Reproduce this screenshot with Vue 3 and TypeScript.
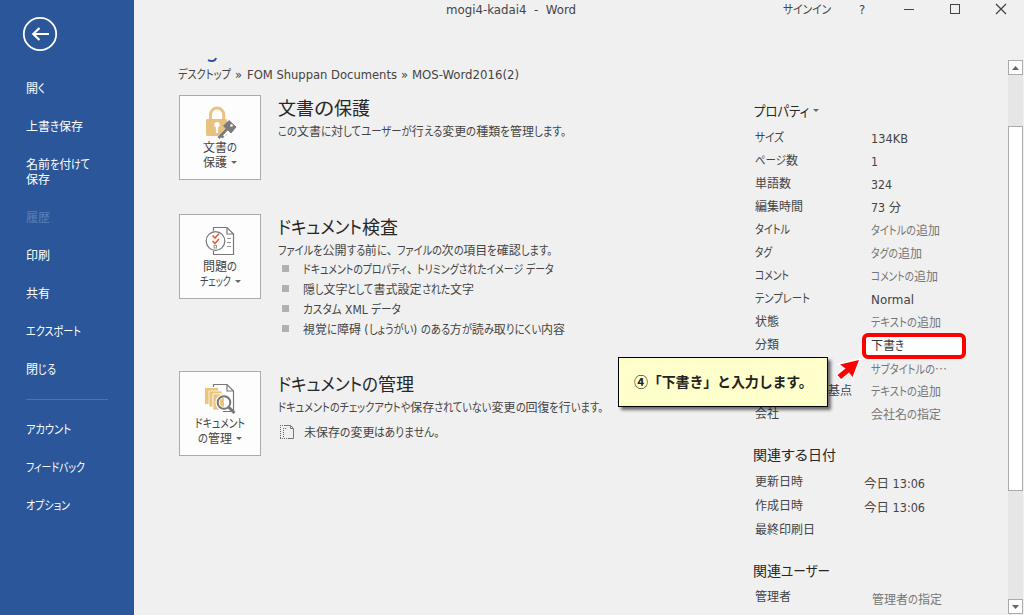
<script setup lang="ts">
import { defineComponent, h, onMounted, ref } from 'vue'

// Sets a line of text to a fixed width by condensing its kana runs;
// lines without kana are scaled as a whole.
const FitText = defineComponent({
  props: {
    text: { type: String, required: true },
    w: { type: Number, required: true },
  },
  setup(props) {
    const root = ref<HTMLElement | null>(null)
    const scale = ref(1)
    const widths = ref<number[]>([])
    const kana = /([\u3002\u3040-\u30ff]+)/
    const runs = props.text.split(kana).filter((s) => s.length > 0)
    const hasKana = kana.test(props.text)
    const flexible = (s: string) => !hasKana || kana.test(s)
    onMounted(() => {
      const parts = Array.from(root.value!.children) as HTMLElement[]
      const natural = parts.map((p) => p.getBoundingClientRect().width)
      let fixed = 0
      let free = 0
      runs.forEach((r, i) => {
        if (flexible(r)) free += natural[i]
        else fixed += natural[i]
      })
      scale.value = (props.w - fixed) / free
      widths.value = natural
    })
    return () =>
      h(
        'span',
        { ref: root, class: 'fit' },
        runs.map((r, i) => {
          const flex = flexible(r) && widths.value.length > 0
          return h(
            'span',
            {
              class: ['fit-run', { 'fit-comma': r === '、' }],
              style: flex ? { width: `${widths.value[i] * scale.value}px` } : {},
            },
            [h('span', { class: 'fit-ink', style: flex ? { transform: `scaleX(${scale.value})` } : {} }, r)],
          )
        }),
      )
  },
})

interface Line { text: string; w: number }
interface NavItem { lines: Line[]; off?: boolean }

const nav: NavItem[] = [
  { lines: [{ text: '開く', w: 19 }] },
  { lines: [{ text: '上書き保存', w: 57 }] },
  { lines: [{ text: '名前を付けて', w: 64 }, { text: '保存', w: 24 }] },
  { lines: [{ text: '履歴', w: 24 }], off: true },
  { lines: [{ text: '印刷', w: 24 }] },
  { lines: [{ text: '共有', w: 24 }] },
  { lines: [{ text: 'エクスポート', w: 55 }] },
  { lines: [{ text: '閉じる', w: 30 }] },
]
const navBottom: NavItem[] = [
  { lines: [{ text: 'アカウント', w: 45 }] },
  { lines: [{ text: 'フィードバック', w: 59 }] },
  { lines: [{ text: 'オプション', w: 44 }] },
]

const checks: Line[] = [
  { text: 'ドキュメントのプロパティ、トリミングされたイメージ データ', w: 251 },
  { text: '隠し文字として書式設定された文字', w: 171 },
  { text: 'カスタム XML データ', w: 98 },
  { text: '視覚に障碍 (しょうがい) のある方が読み取りにくい内容', w: 262 },
]

interface Prop { label: string; lw: number; value: string; vw: number; kind: 'set' | 'hint' | 'input' | 'hint clipped' }
const properties: Prop[] = [
  { label: 'サイズ', lw: 29, value: '134KB', vw: 37, kind: 'set' },
  { label: 'ページ数', lw: 43, value: '1', vw: 7, kind: 'set' },
  { label: '単語数', lw: 36, value: '324', vw: 21, kind: 'set' },
  { label: '編集時間', lw: 48, value: '73 分', vw: 30, kind: 'set' },
  { label: 'タイトル', lw: 35, value: 'タイトルの追加', vw: 69, kind: 'hint' },
  { label: 'タグ', lw: 17, value: 'タグの追加', vw: 51, kind: 'hint' },
  { label: 'コメント', lw: 34, value: 'コメントの追加', vw: 67, kind: 'hint' },
  { label: 'テンプレート', lw: 55, value: 'Normal', vw: 43, kind: 'set' },
  { label: '状態', lw: 24, value: 'テキストの追加', vw: 70, kind: 'hint' },
  { label: '分類', lw: 24, value: '下書き', vw: 33, kind: 'input' },
  { label: 'サブタイトル', lw: 54, value: 'サブタイトルの…', vw: 76, kind: 'hint clipped' },
  { label: 'ハイパーリンクの基点', lw: 97, value: 'テキストの追加', vw: 70, kind: 'hint' },
  { label: '会社', lw: 24, value: '会社名の指定', vw: 70, kind: 'hint' },
]

const dates = [
  { label: '更新日時', lw: 48, value: '今日 13:06' },
  { label: '作成日時', lw: 48, value: '今日 13:06' },
  { label: '最終印刷日', lw: 60, value: '' },
]
</script>

<template>
  <div class="window">
    <nav class="side">
      <svg class="back" width="36" height="36" viewBox="0 0 36 36">
        <circle cx="18" cy="18" r="16.2" fill="none" stroke="#fff" stroke-width="1.8" />
        <path d="M27 18H11.5M17.5 12L11.3 18L17.5 24" fill="none" stroke="#fff" stroke-width="2.2" />
      </svg>
      <div v-for="(item, i) in nav" :key="i" class="nav-item" :class="{ off: item.off }">
        <div v-for="l in item.lines" :key="l.text"><FitText :text="l.text" :w="l.w" /></div>
      </div>
      <div class="rule"></div>
      <div v-for="(item, i) in navBottom" :key="'b' + i" class="nav-item">
        <div v-for="l in item.lines" :key="l.text"><FitText :text="l.text" :w="l.w" /></div>
      </div>
    </nav>

    <div class="body">
      <header class="titlebar">
        <div class="doc-title"><FitText text="mogi4-kadai4  -  Word" :w="130" /></div>
        <div class="sign"><FitText text="サインイン" :w="48" /></div>
        <div class="help">?</div>
        <svg class="win-icons" width="104" height="12" viewBox="0 0 104 12" fill="none" stroke="#444">
          <path d="M1 6.5H11" />
          <rect x="47.5" y="1.5" width="9" height="9" />
          <path d="M93 1L103 11M103 1L93 11" stroke-width="1.3" />
        </svg>
      </header>

      <div class="content">
        <main class="info">
          <svg class="title-tail" width="12" height="6" viewBox="0 0 12 6">
            <path d="M1 3.2C4 4.6 8 4.6 9.2 1" fill="none" stroke="#2b579a" stroke-width="2" />
          </svg>
          <div class="crumbs">
            <FitText text="デスクトップ" :w="53" />
            <FitText text="»" :w="7" />
            <FitText text="FOM Shuppan Documents" :w="150" />
            <FitText text="»" :w="7" />
            <FitText text="MOS-Word2016(2)" :w="107" />
          </div>

          <section class="block protect">
            <div class="tile">
              <svg width="34" height="34" viewBox="0 0 34 34">
                <path d="M7.5 15V9.7a6.6 6.6 0 0 1 13.2 0V15" fill="none" stroke="#e9c27f" stroke-width="3" />
                <rect x="3" y="14" width="21" height="17" rx="1.5" fill="#e9c27f" />
                <circle cx="14" cy="19.7" r="2.7" fill="#fff" />
                <path d="M14 20V28" stroke="#fff" stroke-width="2.2" />
                <path d="M16 34L26 23" stroke="#fdfdfd" stroke-width="5" />
                <path d="M20.5 21L26 15.5L33 22L28 28Z" fill="#7b7b7b" stroke="#7b7b7b" />
                <path d="M24 24L15.5 33M18 30.500L20.500 32.500" stroke="#7b7b7b" stroke-width="2.8" />
                <circle cx="28.5" cy="20.5" r="1.3" fill="#fff" />
              </svg>
              <div class="cap"><FitText text="文書の" :w="34" /></div>
              <div class="cap"><FitText text="保護" :w="24" /><i class="caret"></i></div>
            </div>
            <div class="text">
              <h2><FitText text="文書の保護" :w="92" /></h2>
              <p><FitText text="この文書に対してユーザーが行える変更の種類を管理します。" :w="288" /></p>
            </div>
          </section>

          <section class="block inspect">
            <div class="tile">
              <svg width="34" height="34" viewBox="0 0 34 34" fill="none" stroke="#777" stroke-width="1.2">
                <path d="M10.5 7V3.5H24L30.5 10V30.5H10.5V27" fill="#fff" />
                <path d="M24 3.5V10H30.5" />
                <path d="M24 14.5H28M24 18.5H28M24 22.5H28" stroke="#999" stroke-width="1" />
                <circle cx="12.5" cy="17" r="9.3" fill="#fff" />
                <path d="M9.5 11.5L12 14L16 9.5M9.5 17L12 19.5L16 15" stroke="#e8603c" stroke-width="1.7" />
                <rect x="11" y="21.5" width="2.5" height="2.5" stroke="#999" stroke-width="1" />
              </svg>
              <div class="cap"><FitText text="問題の" :w="34" /></div>
              <div class="cap"><FitText text="チェック" :w="31" /><i class="caret"></i></div>
            </div>
            <div class="text">
              <h2><FitText text="ドキュメント検査" :w="120" /></h2>
              <p><FitText text="ファイルを公開する前に、ファイルの次の項目を確認します。" :w="274" /></p>
              <ul>
                <li v-for="c in checks" :key="c.text"><FitText :text="c.text" :w="c.w" /></li>
              </ul>
            </div>
          </section>

          <section class="block manage">
            <div class="tile">
              <svg width="34" height="34" viewBox="0 0 34 34" fill="none">
                <path d="M10.5 6V3.5H24L30.5 10V30.5H20" fill="#fff" stroke="#777" stroke-width="1.2" />
                <path d="M24 3.5V10H30.5" stroke="#777" stroke-width="1.2" />
                <path d="M2 7H15V10H6V23H2Z" fill="#ecc47c" />
                <path d="M6 10H19V13H10V26H6Z" fill="#ecc47c" stroke="#fff" stroke-width=".7" />
                <path d="M10 13H23V29H10Z" fill="#ecc47c" stroke="#fff" stroke-width=".7" />
                <circle cx="21" cy="21.5" r="6.6" fill="#fff" stroke="#fff" stroke-width="4" />
                <path d="M21 17a4.5 4.5 0 0 0 0 9Z" fill="#ecc47c" />
                <circle cx="21" cy="21.5" r="6.3" stroke="#777" stroke-width="2" />
                <path d="M25.5 26L31.5 32" stroke="#777" stroke-width="3" />
              </svg>
              <div class="cap"><FitText text="ドキュメント" :w="50" /></div>
              <div class="cap"><FitText text="の管理" :w="34" /><i class="caret"></i></div>
            </div>
            <div class="text">
              <h2><FitText text="ドキュメントの管理" :w="136" /></h2>
              <p><FitText text="ドキュメントのチェックアウトや保存されていない変更の回復を行います。" :w="325" /></p>
              <div class="unsaved">
                <svg width="16" height="16" viewBox="0 0 16 16" fill="none" stroke="#666">
                  <path d="M1.5 1V15M1 1.5H10M1 14.5H10M4.5 4V13M4 4.5H8" stroke-dasharray="1 1" />
                  <path d="M6 1.5H11.5L14.5 4.5V14.5H10M11.5 1.5V4.5H14.5" stroke="#777" />
                </svg>
                <FitText text="未保存の変更はありません。" :w="136" />
              </div>
            </div>
          </section>
        </main>

        <aside class="details">
          <h3 class="h-props"><FitText text="プロパティ" :w="55" /><i class="caret"></i></h3>
          <dl class="props">
            <div v-for="p in properties" :key="p.label" class="row">
              <dt><FitText :text="p.label" :w="p.lw" /></dt>
              <dd :class="p.kind"><FitText :text="p.value" :w="p.vw" /></dd>
            </div>
          </dl>
          <h3 class="h-dates"><FitText text="関連する日付" :w="83" /></h3>
          <dl class="dates">
            <div v-for="d in dates" :key="d.label" class="row">
              <dt><FitText :text="d.label" :w="d.lw" /></dt>
              <dd v-if="d.value"><FitText :text="d.value" :w="61" /></dd>
            </div>
          </dl>
          <h3 class="h-people"><FitText text="関連ユーザー" :w="77" /></h3>
          <dl class="people">
            <div class="row">
              <dt><FitText text="管理者" :w="36" /></dt>
              <dd class="hint"><FitText text="管理者の指定" :w="70" /></dd>
            </div>
          </dl>
        </aside>

        <div class="scroll">
          <div class="sbtn"><svg width="7" height="4"><path d="M0 4L3.5 0L7 4Z" fill="#666" /></svg></div>
          <div class="thumb"></div>
          <div class="sbtn"><svg width="7" height="4"><path d="M0 0L3.5 4L7 0Z" fill="#666" /></svg></div>
        </div>
      </div>
    </div>

    <div class="callout">④「下書き」と入力します。</div>
    <svg class="pointer" width="28" height="24" viewBox="0 0 28 24">
      <path d="M24 2L5 6.5L10.5 10.5L2.5 17L6 21L14 14.5L17.5 19Z" fill="#f00" stroke="#fff" stroke-width="3" paint-order="stroke" />
    </svg>
  </div>
</template>

<style>
html, body { margin: 0; overflow: hidden; }
.fit { display: inline-flex; white-space: pre; vertical-align: -1px; }
.fit-run { display: block; flex: none; }
.fit-ink { display: inline-block; transform-origin: 0 50%; }
.fit-comma { padding-right: 4px; }
</style>

<style scoped>
.window {
  position: relative;
  display: flex;
  width: 1024px;
  height: 615px;
  overflow: hidden;
  background: #f0f0f0;
  color: #444;
  font: 12px/24px "DejaVu Sans Condensed", "Noto Sans CJK JP", sans-serif;
  font-feature-settings: "palt";
}
h2, h3, p, ul, dl, dd { margin: 0; padding: 0; font-weight: 400; }
.side { width: 134px; flex: none; background: #2b579a; color: #fff; }
.back { display: block; margin: 16px 0 18px 22px; }
.nav-item { padding: 11px 0 12px 26px; line-height: 15px; }
.nav-item > div { height: 15px; }
.off { color: #5a7fb8; }
.rule { height: 1px; width: 82px; margin: 10px 0 11px 26px; background: #4472c4; }
.body { flex: 1; min-width: 0; display: flex; flex-direction: column; }
.titlebar { display: flex; height: 57px; line-height: 19px; }
.doc-title { width: 338px; padding-left: 312px; flex: none; }
.sign { width: 76px; flex: none; margin-left: -1px; }
.help { width: 44px; font-size: 13px; }
.win-icons { margin-top: 3px; }
.content { flex: 1; min-height: 0; display: flex; }
.info { width: 619px; flex: none; padding-left: 45px; box-sizing: border-box; }
.title-tail { display: block; margin-left: 28px; }
.crumbs { display: flex; gap: 4.3px; height: 32px; margin-left: -1px; line-height: 25px; }
.block { display: flex; gap: 17px; }
.protect { height: 119px; }
.inspect { height: 157px; }
.tile {
  width: 82px;
  height: 85px;
  box-sizing: border-box;
  border: 1px solid #ababab;
  background: #fdfdfd;
  display: flex;
  flex-direction: column;
  align-items: center;
  padding-top: 9px;
  flex: none;
}
.tile > svg { margin-bottom: 2px; }
.cap { display: flex; align-items: center; height: 15px; line-height: 15px; }
.caret { border: 3px solid transparent; border-top-color: #666; border-bottom: 0; margin: 0 0 2px 4px; }
.text { min-width: 0; }
h2 { height: 24px; font-size: 18px; line-height: 25px; color: #262626; }
p { height: 24px; }
ul { list-style: none; margin-top: -3px; }
li { display: flex; align-items: center; height: 20px; line-height: 20px; gap: 14px; padding-left: 4px; }
li::before { content: ""; width: 7px; height: 7px; margin-bottom: 1px; background: #b1b1b1; }
li .fit { margin-top: 2px; }
.unsaved { display: flex; align-items: center; gap: 9px; padding-left: 1px; }
.unsaved .fit { margin-top: 2px; }
.details { width: 255px; flex: none; padding-top: 42px; box-sizing: border-box; }
h3 { display: flex; align-items: center; height: 24px; font-size: 14px; color: #262626; }
.h-props { padding-left: 1px; }
.h-props .caret { margin-left: 4px; }
.props { padding-top: 3px; }
.row { display: flex; height: 23px; line-height: 23px; padding-left: 2px; }
dt { width: 116px; flex: none; white-space: nowrap; }
.props dd { padding-top: 1px; }
dd.hint { color: #767676; }
.clipped { font-family: "Noto Sans CJK JP", sans-serif; line-height: 22px; }
.props dd.input {
  width: 104px;
  height: 26px;
  box-sizing: border-box;
  margin: 0 0 0 -9px;
  padding: 0 0 0 5px;
  line-height: 17px;
  border: 4px solid #f00;
  border-radius: 6px;
  background: #fff;
  color: #333;
}
.h-dates { margin-top: 18px; }
.dates { padding-top: 2px; }
.dates .row { height: 24px; line-height: 24px; }
.dates dt { width: 109px; }
.dates dd { padding-top: 2px; }
.h-people { margin-top: 18px; }
.people { padding-top: 2px; }
.people dt { width: 117px; }
.people dd { padding-top: 3px; }
.scroll {
  display: flex;
  flex-direction: column;
  justify-content: space-between;
  width: 15px;
  height: 554px;
  margin-top: 3px;
  background: #e6e6e6;
}
.sbtn {
  height: 15px;
  box-sizing: border-box;
  border: 1px solid #ababab;
  background: #fff;
  display: flex;
  align-items: center;
  justify-content: center;
}
.thumb { height: 365px; margin-bottom: 57px; box-sizing: border-box; border: 1px solid #ababab; background: #fff; }
.callout {
  position: absolute;
  left: 618px;
  top: 357px;
  width: 210px;
  height: 50px;
  box-sizing: border-box;
  padding-left: 15px;
  border: 1px solid #000;
  background: #ffc;
  box-shadow: 3px 3px 3px rgba(0, 0, 0, .55);
  color: #222;
  font: bold 14px/46px "Noto Sans CJK JP", sans-serif;
  font-feature-settings: normal;
  letter-spacing: -.15px;
  white-space: nowrap;
}
.pointer { position: absolute; left: 835px; top: 358px; }
</style>
